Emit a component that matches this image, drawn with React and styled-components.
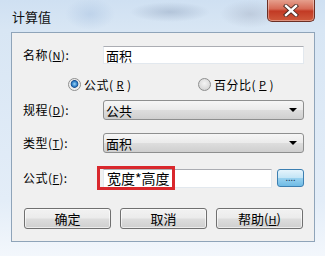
import React from "react";
import styled, { createGlobalStyle } from "styled-components";

const Global = createGlobalStyle`
  html, body { margin: 0; padding: 0; background: #ffffff; }
  body { font-family: "Noto Sans CJK SC", "Noto Sans", sans-serif; }
`;

const Window = styled.div`
  position: relative;
  width: 325px;
  height: 256px;
  overflow: hidden;
  background:
    radial-gradient(ellipse 40px 10px at 170px 12px, rgba(120,140,170,0.35), transparent),
    radial-gradient(ellipse 30px 14px at 250px 14px, rgba(150,160,180,0.35), transparent),
    radial-gradient(ellipse 25px 16px at 90px 14px, rgba(170,195,225,0.5), transparent),
    linear-gradient(180deg, #cfe0f2 0px, #d8e6f4 30px, #e3edf8 200px, #f3f7fc 256px);
  font-size: 12px;
  color: #000;
`;

const TitleBar = styled.div`
  height: 32px;
  display: flex;
  align-items: flex-start;
  padding-left: 12px;
`;

const Title = styled.div`
  margin-top: 9px;
  font-size: 13px;
  line-height: 16px;
  color: #111;
`;

const CloseButton = styled.div`
  margin-left: auto;
  margin-right: 10px;
  width: 46px;
  height: 22px;
  margin-top: -1px;
  border: 1px solid #6b2f25;
  border-top: none;
  border-radius: 0 0 5px 5px;
  background: linear-gradient(180deg, #e7a593 0%, #d66a55 45%, #c23a24 55%, #cf5a3c 100%);
  box-shadow: inset 0 0 0 1px rgba(255,255,255,0.35);
  display: flex;
  align-items: center;
  justify-content: center;
`;

const Panel = styled.div`
  position: relative;
  margin: 0 10px 0 11px;
  height: 208px;
  border: 1px solid #8fa4b9;
  background: #f0f0f0;
  padding: 0 10px 0 11px;
`;

const Row = styled.div`
  position: relative;
  display: flex;
  align-items: center;
  height: ${(p) => p.$h}px;
  margin-top: ${(p) => p.$mt}px;
`;

const Label = styled.div`
  width: 80px;
  flex: none;
  white-space: nowrap;
  font-size: 12px;
  line-height: 14px;
  letter-spacing: 0.5px;
  & u { font-size: 11px; }
`;

const TextBox = styled.div`
  flex: ${(p) => (p.$w ? "none" : "1")};
  width: ${(p) => (p.$w ? `${p.$w}px` : "auto")};
  height: ${(p) => p.$h || 18}px;
  box-sizing: border-box;
  background: #fff;
  border: 1px solid #e2e8ee;
  border-top-color: #abadb3;
  display: flex;
  align-items: center;
  padding-left: ${(p) => p.$pl || 2}px;
  font-size: ${(p) => p.$fs || 12}px;
`;

const Select = styled.div`
  flex: 1;
  height: 20px;
  box-sizing: border-box;
  border: 1px solid #8e8f8f;
  border-radius: 3px;
  background: linear-gradient(180deg, #f6f6f6 0%, #ebebeb 48%, #dddddd 52%, #cfcfcf 100%);
  display: flex;
  align-items: center;
  padding: 0 6px 0 2px;
  font-size: 13px;
`;

const Arrow = styled.span`
  margin-left: auto;
  width: 0;
  height: 0;
  border-left: 4px solid transparent;
  border-right: 4px solid transparent;
  border-top: 4px solid #000;
`;

const RadioGroup = styled.div`
  display: flex;
  align-items: center;
  padding-left: 45px;
`;

const RadioItem = styled.div`
  display: flex;
  align-items: center;
  width: ${(p) => p.$w || "auto"};
  gap: 3px;
  letter-spacing: 0.5px;
  & u { font-size: 11px; }
`;

const RadioDot = styled.span`
  width: 13px;
  height: 13px;
  box-sizing: border-box;
  border-radius: 50%;
  border: 1px solid #8e8f8f;
  background: ${(p) =>
    p.$on
      ? "radial-gradient(circle at 50% 45%, #9fd6f5 0, #2f7fc8 2.5px, #1b4f8f 3.5px, #e9e9e9 4.2px, #ffffff 100%)"
      : "radial-gradient(circle at 50% 40%, #f4f4f4 0, #dcdcdc 60%, #c9c9c9 100%)"};
`;

const Highlight = styled.div`
  position: absolute;
  left: 74px;
  top: 0;
  width: 78px;
  height: 24px;
  box-sizing: border-box;
  border: 3px solid #d9282d;
  pointer-events: none;
`;

const Browse = styled.div`
  margin-left: 5px;
  width: 27px;
  height: 18px;
  box-sizing: border-box;
  border: 1px solid #3c7fb1;
  border-radius: 3px;
  background: linear-gradient(180deg, #e5f4fc 0%, #c4e5f6 48%, #98d1ef 52%, #6fbbe5 100%);
  display: flex;
  align-items: center;
  justify-content: center;
  font-size: 9px;
  color: #1a3a5a;
  line-height: 1;
  padding-bottom: 2px;
`;

const ButtonRow = styled.div`
  display: flex;
  gap: 9px;
  margin-top: 18px;
  padding-left: 1px;
`;

const Button = styled.div`
  width: 87px;
  height: 21px;
  box-sizing: border-box;
  border: 1px solid #707070;
  border-radius: 3px;
  background: linear-gradient(180deg, #f2f2f2 0%, #ebebeb 48%, #dddddd 52%, #cfcfcf 100%);
  box-shadow: inset 0 0 0 1px rgba(255,255,255,0.6);
  display: flex;
  align-items: center;
  justify-content: center;
  font-size: 13px;
  & u { font-size: 11px; }
`;

export default function App() {
  return (
    <>
      <Global />
      <Window>
        <TitleBar>
          <Title>计算值</Title>
          <CloseButton>
            <svg width="16" height="13" viewBox="0 0 16 13">
              <path
                d="M3 2 L13 11 M13 2 L3 11"
                stroke="#4a2a22"
                strokeWidth="4.2"
                strokeLinecap="square"
              />
              <path
                d="M3 2 L13 11 M13 2 L3 11"
                stroke="#ffffff"
                strokeWidth="2.4"
                strokeLinecap="square"
              />
            </svg>
          </CloseButton>
        </TitleBar>
        <Panel>
          <Row $mt={13} $h={18}>
            <Label>名称(<u>N</u>):</Label>
            <TextBox $fs={13}>面积</TextBox>
          </Row>
          <Row $mt={11} $h={18}>
            <RadioGroup>
              <RadioItem $w="130px">
                <RadioDot $on />
                公式(<u>R</u>)
              </RadioItem>
              <RadioItem>
                <RadioDot />
                百分比(<u>P</u>)
              </RadioItem>
            </RadioGroup>
          </Row>
          <Row $mt={7} $h={20}>
            <Label>规程(<u>D</u>):</Label>
            <Select>
              公共
              <Arrow />
            </Select>
          </Row>
          <Row $mt={13} $h={20}>
            <Label>类型(<u>T</u>):</Label>
            <Select>
              面积
              <Arrow />
            </Select>
          </Row>
          <Row $mt={13} $h={24}>
            <Label>公式(<u>F</u>):</Label>
            <TextBox $w={169} $h={19} $fs={14} $pl={3}>
              宽度*高度
            </TextBox>
            <Browse>....</Browse>
            <Highlight />
          </Row>
          <ButtonRow>
            <Button>确定</Button>
            <Button>取消</Button>
            <Button>
              帮助(<u>H</u>)
            </Button>
          </ButtonRow>
        </Panel>
      </Window>
    </>
  );
}
